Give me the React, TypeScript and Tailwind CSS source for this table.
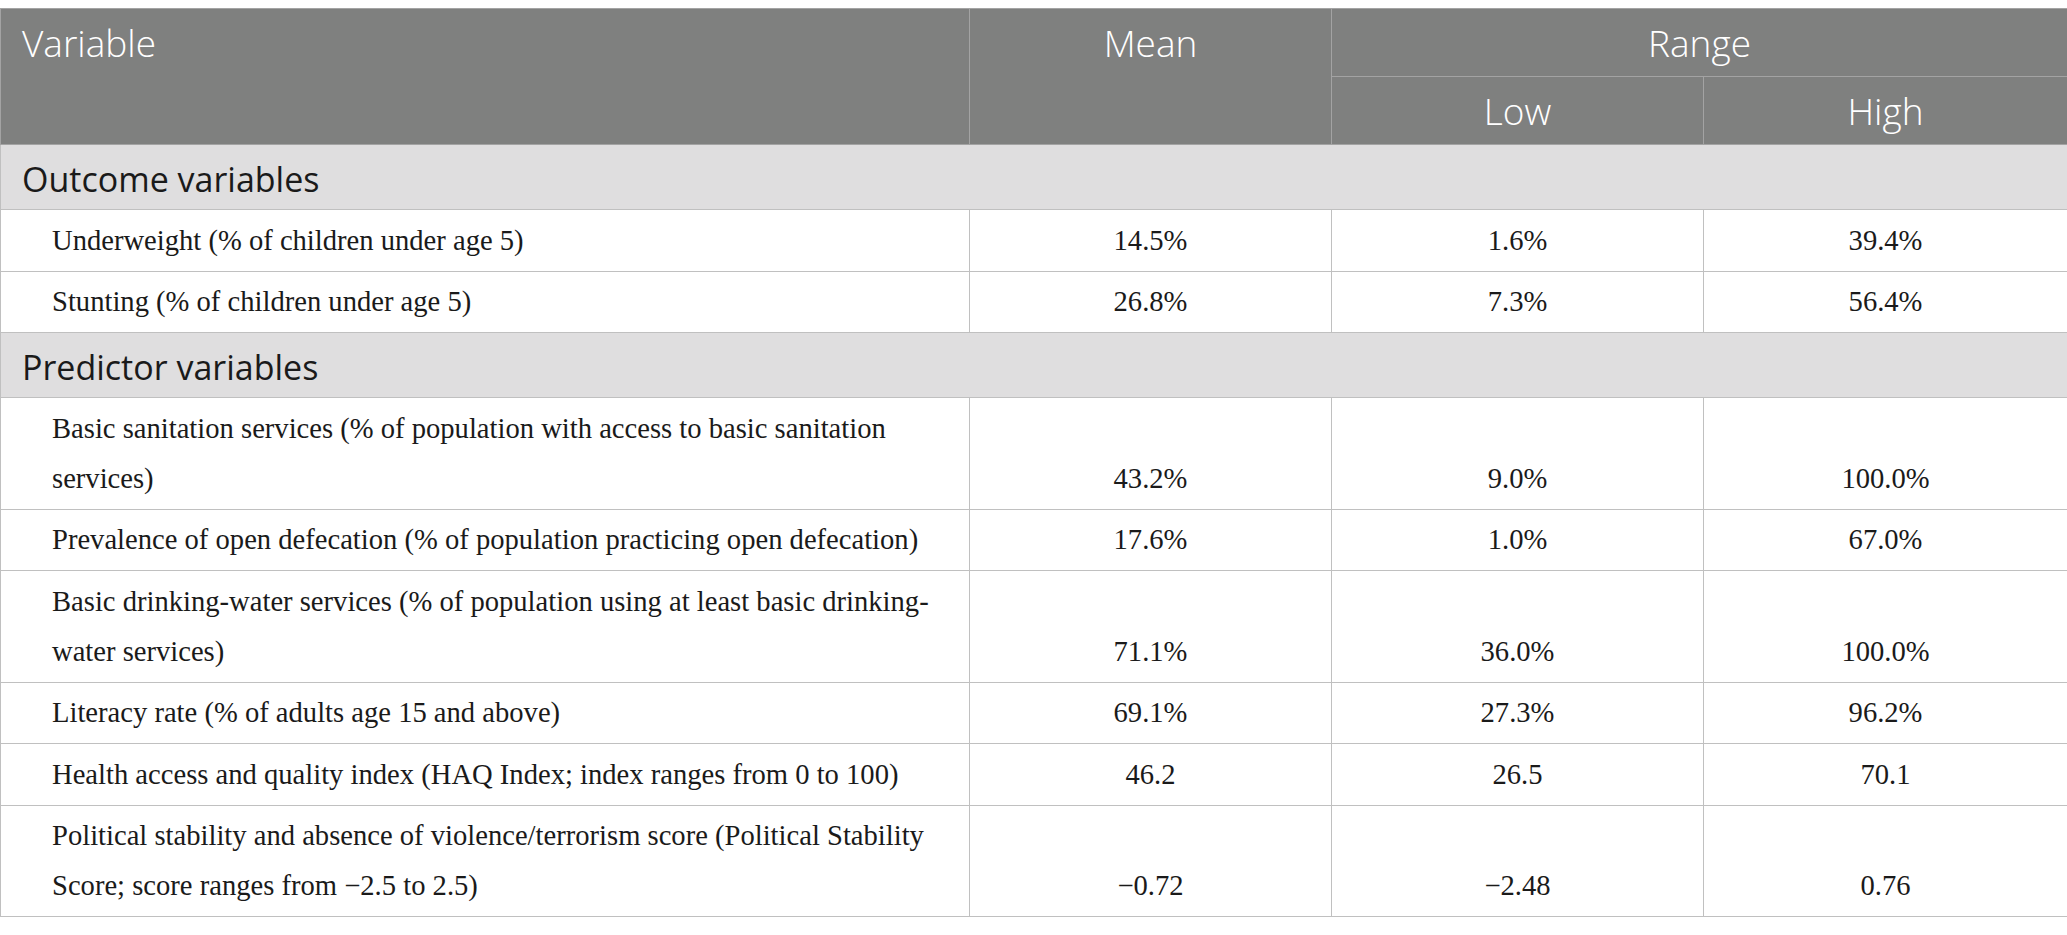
import React from 'react';

interface Row {
  label: string;
  mean: string;
  low: string;
  high: string;
}

const outcome: Row[] = [
  { label: 'Underweight (% of children under age 5)', mean: '14.5%', low: '1.6%', high: '39.4%' },
  { label: 'Stunting (% of children under age 5)', mean: '26.8%', low: '7.3%', high: '56.4%' },
];

const predictor: Row[] = [
  { label: 'Basic sanitation services (% of population with access to basic sanitation services)', mean: '43.2%', low: '9.0%', high: '100.0%' },
  { label: 'Prevalence of open defecation (% of population practicing open defecation)', mean: '17.6%', low: '1.0%', high: '67.0%' },
  { label: 'Basic drinking-water services (% of population using at least basic drinking-water services)', mean: '71.1%', low: '36.0%', high: '100.0%' },
  { label: 'Literacy rate (% of adults age 15 and above)', mean: '69.1%', low: '27.3%', high: '96.2%' },
  { label: 'Health access and quality index (HAQ Index; index ranges from 0 to 100)', mean: '46.2', low: '26.5', high: '70.1' },
  { label: 'Political stability and absence of violence/terrorism score (Political Stability Score; score ranges from \u22122.5 to 2.5)', mean: '\u22120.72', low: '\u22122.48', high: '0.76' },
];

const sans = "font-['Open_Sans',sans-serif]";
const serif = "font-['Liberation_Serif',serif]";

function Section({ title }: { title: string }) {
  return (
    <tr className="bg-[#dfdedf]">
      <td colSpan={4} className={`${sans} h-[65px] border border-[#c0c0c0] pl-[21px] pt-[5px] text-[34px] text-[#1a1a1a] align-middle`}>
        {title}
      </td>
    </tr>
  );
}

function DataRow({ row }: { row: Row }) {
  const num = `${serif} border border-[#c0c0c0] text-center align-bottom text-[28.6px] leading-[50px] pb-[5px]`;
  return (
    <tr className="text-[#1a1a1a]">
      <td className={`${serif} border border-[#c0c0c0] pl-[51px] pr-[14px] pt-[5.5px] pb-[5px] text-[28.6px] leading-[50px] align-top`}>
        {row.label}
      </td>
      <td className={num}>{row.mean}</td>
      <td className={num}>{row.low}</td>
      <td className={num}>{row.high}</td>
    </tr>
  );
}

export default function App() {
  const th = `${sans} border border-[#a3a3a3] font-light text-white text-[37px] leading-[50px] align-top h-[68px] pt-[9px]`;
  return (
    <div className="bg-white w-[2067px] h-[935px] pt-[8px]">
      <table className="w-[2067px] table-fixed border-collapse border border-[#c0c0c0]">
        <colgroup>
          <col className="w-[969px]" />
          <col className="w-[362px]" />
          <col className="w-[372px]" />
          <col className="w-[364px]" />
        </colgroup>
        <thead className="bg-[#7f807f]">
          <tr>
            <th rowSpan={2} className={`${th} text-left pl-[21px]`}>Variable</th>
            <th rowSpan={2} className={`${th} text-center`}>Mean</th>
            <th colSpan={2} className={`${th} text-center`}>Range</th>
          </tr>
          <tr>
            <th className={`${th} text-center`}>Low</th>
            <th className={`${th} text-center`}>High</th>
          </tr>
        </thead>
        <tbody>
          <Section title="Outcome variables" />
          {outcome.map((r) => (
            <DataRow key={r.label} row={r} />
          ))}
          <Section title="Predictor variables" />
          {predictor.map((r) => (
            <DataRow key={r.label} row={r} />
          ))}
        </tbody>
      </table>
    </div>
  );
}
